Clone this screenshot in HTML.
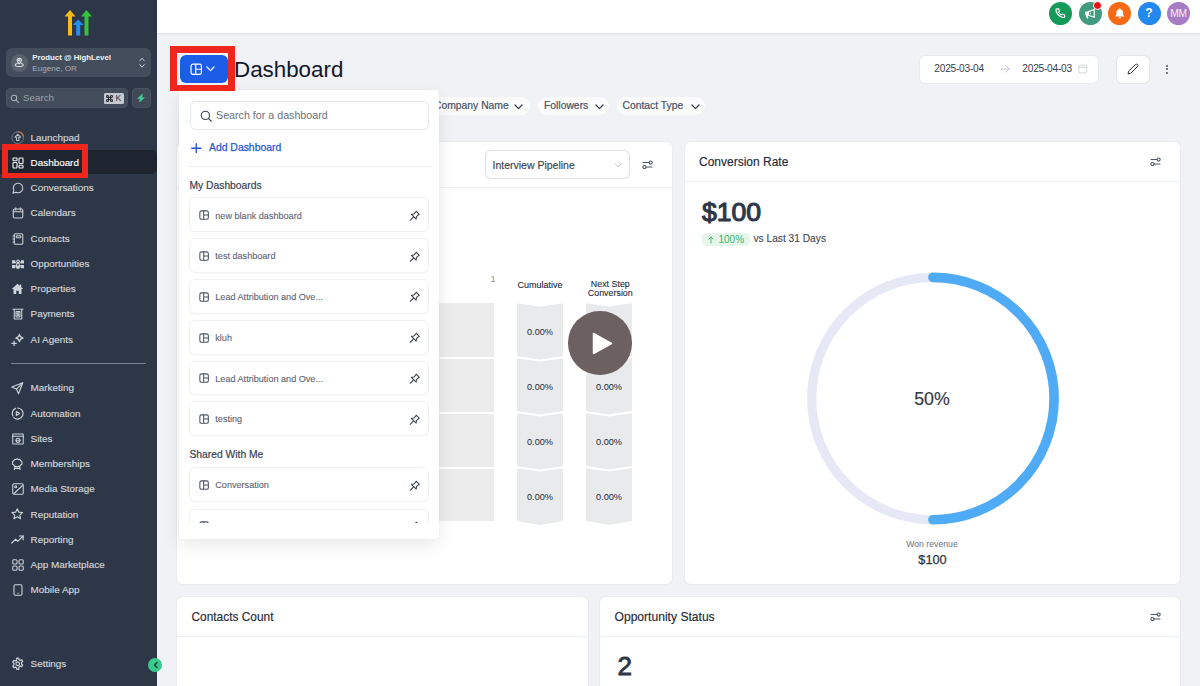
<!DOCTYPE html>
<html><head><meta charset="utf-8">
<style>
*{box-sizing:border-box;margin:0;padding:0}
html,body{width:1200px;height:686px;overflow:hidden}
body{position:relative;background:#f1f2f6;font-family:"Liberation Sans",sans-serif;color:#1f2937}
.abs{position:absolute}
svg{display:block}
#sb{position:absolute;left:0;top:0;width:157px;height:686px;background:#2d3748}
.nav{position:absolute;left:0;width:157px;height:22px;color:#d3d7dd;font-size:9.9px;-webkit-text-stroke:0.15px #d3d7dd}
.nav .ic{position:absolute}
.nav .tx{position:absolute;left:30.6px;top:6.3px;line-height:12px;white-space:nowrap}
#hd{position:absolute;left:157px;top:0;width:1043px;height:34px;background:#fff;border-bottom:1px solid #e1e4e8;box-shadow:0 1px 2px rgba(0,0,0,0.03)}
.circ{position:absolute;top:2px;width:23px;height:23px;border-radius:50%}
.card{position:absolute;background:#fff;border-radius:6px;box-shadow:0 0 0 1px #e9ecf0,0 1px 2px rgba(0,0,0,0.04)}
.chdr{position:absolute;left:0;right:0;top:0;border-bottom:1px solid #edeff2}
.chip{position:absolute;top:97px;height:18px;border-radius:9px;background:#fbfbfc;color:#4a5262;font-size:10.35px;line-height:18px;white-space:nowrap;-webkit-text-stroke:0.2px #4a5262}
</style></head>
<body>
<!-- SIDEBAR -->
<div id="sb">
  <!-- logo -->
  <svg class="abs" style="left:63px;top:9px" width="30" height="28" viewBox="0 0 30 28">
    <path d="M1.5 7.4 L7 1 L12.5 7.4 L9 7.4 L9 26.5 L5 26.5 L5 7.4 Z" fill="#fbbb12"/>
    <path d="M18 7.4 L23.5 1 L29 7.4 L25.5 7.4 L25.5 26.5 L21.5 26.5 L21.5 7.4 Z" fill="#36c23d"/>
    <path d="M9.8 16 L15.2 10.6 L20.6 16 L17.2 16 L17.2 26.5 L13.2 26.5 L13.2 16 Z" fill="#1f8ff5"/>
  </svg>
  <!-- location -->
  <div class="abs" style="left:5.5px;top:48px;width:145.5px;height:29px;border-radius:6px;background:#434d5c"></div>
  <div class="abs" style="left:10.6px;top:54px;width:17.5px;height:17.5px;border-radius:50%;background:#59626f"></div>
  <svg class="abs" style="left:14.2px;top:57.2px" width="10.5" height="10.5" viewBox="0 0 24 24" fill="none" stroke="#e5e7eb" stroke-width="2.3" stroke-linecap="round" stroke-linejoin="round"><path d="M12 15.5c-3-3-5-5.2-5-7.8a5 5 0 0 1 10 0c0 2.6-2 4.8-5 7.8z"/><circle cx="12" cy="7.7" r="1.6"/><path d="M7.5 15c-3 .7-4.8 1.9-4.8 3.3 0 2 4.2 3.4 9.3 3.4s9.3-1.4 9.3-3.4c0-1.4-1.8-2.6-4.8-3.3"/></svg>
  <div class="abs" style="left:32.3px;top:53px;font-size:7.8px;font-weight:700;color:#f3f4f6;white-space:nowrap;line-height:10px">Product @ HighLevel</div>
  <div class="abs" style="left:32.3px;top:63.8px;font-size:8.1px;color:#a9b0ba;white-space:nowrap;line-height:10px">Eugene, OR</div>
  <svg class="abs" style="left:138.6px;top:56.5px" width="6" height="11.5" viewBox="0 0 6 11.5" fill="none" stroke="#c9ced6" stroke-width="1" stroke-linecap="round" stroke-linejoin="round"><path d="M0.8 3.8 L3 1.2 L5.2 3.8"/><path d="M0.8 7.6 L3 10.2 L5.2 7.6"/></svg>
  <!-- search -->
  <div class="abs" style="left:5.5px;top:88px;width:122px;height:19.5px;border-radius:5px;background:#424c5a;box-shadow:inset 0 0 0 0.6px #4d5664"></div>
  <svg class="abs" style="left:9.8px;top:93.6px" width="9.5" height="9.5" viewBox="0 0 24 24" fill="none" stroke="#aab1bb" stroke-width="2.6" stroke-linecap="round"><circle cx="10" cy="10" r="7"/><path d="M15.5 15.5 L22 22"/></svg>
  <div class="abs" style="left:23px;top:92px;font-size:9.8px;color:#9aa2ad;line-height:12px">Search</div>
  <div class="abs" style="left:103.7px;top:92.9px;width:20.3px;height:10.9px;border-radius:1.5px;background:#c6cad0"></div><svg class="abs" style="left:106.2px;top:95px" width="7" height="7" viewBox="0 0 14 14" fill="none" stroke="#2b313b" stroke-width="2.2"><path d="M5 5 H9 V9 H5 Z M5 5 V3 A2 2 0 1 0 3 5 H5 M9 5 V3 A2 2 0 1 1 11 5 H9 M9 9 V11 A2 2 0 1 0 11 9 H9 M5 9 V11 A2 2 0 1 1 3 9 H5"/></svg><div class="abs" style="left:115.5px;top:93px;font-size:8.5px;line-height:11px;color:#2b313b">K</div>
  <div class="abs" style="left:132px;top:88px;width:19px;height:19.5px;border-radius:5px;background:#3f4958;box-shadow:inset 0 0 0 0.8px #4d5766"></div>
  <svg class="abs" style="left:137.2px;top:94px" width="8" height="8.2" viewBox="0 0 8 8.2"><path d="M5.6 0 L0.6 4.5 L3.4 4.5 L2.4 8.2 L7.4 3.7 L4.6 3.7 Z" fill="#3fd298" stroke="#3fd298" stroke-width="0.6" stroke-linejoin="round"/></svg>

  <!-- active -->
  <div class="abs" style="left:0;top:150px;width:157px;height:23.5px;background:#1e2530;border-radius:0 5px 5px 0"></div>
  <div class="abs" style="left:11px;top:362.8px;width:135px;height:1.3px;background:#7a828e"></div>
  <div class="nav" style="top:125.30px"><div class="ic" style="left:10.90px;top:5.55px"><svg width="13.5" height="13.5" viewBox="0 0 24 24" fill="none" stroke-linecap="round" stroke-linejoin="round"><circle cx="12" cy="12" r="10.5" stroke="#6f7784" stroke-width="1.7"/><path d="M12.5 1.5 A10.5 10.5 0 0 1 22 9" stroke="#c9783f" stroke-width="2.2"/><path d="M12 6 L7 11 H10 V17 H14 V11 H17 Z" stroke="#b9c0ca" stroke-width="1.9"/></svg></div><div class="tx">Launchpad</div></div>
  <div class="nav" style="top:150.55px"><div class="ic" style="left:11.65px;top:6.30px"><svg width="12" height="12" viewBox="0 0 24 24" fill="none" stroke="#eef0f3" stroke-width="2.3" stroke-linecap="round" stroke-linejoin="round"><rect x="2" y="2" width="8" height="5.5" rx="1.3"/><rect x="2" y="11" width="8" height="11" rx="1.3"/><rect x="14" y="2" width="8" height="11" rx="1.3"/><rect x="14" y="16.5" width="8" height="5.5" rx="1.3"/></svg></div><div class="tx" style="color:#fff;-webkit-text-stroke-color:#fff">Dashboard</div></div>
  <div class="nav" style="top:175.80px"><div class="ic" style="left:11.65px;top:6.30px"><svg width="12" height="12" viewBox="0 0 24 24" fill="none" stroke="#cdd2d9" stroke-width="2.15" stroke-linecap="round" stroke-linejoin="round"><path d="M7.9 20.5A9.5 9.5 0 1 0 3.6 16.2L2 22.5Z"/></svg></div><div class="tx">Conversations</div></div>
  <div class="nav" style="top:201.05px"><div class="ic" style="left:11.65px;top:6.30px"><svg width="12" height="12" viewBox="0 0 24 24" fill="none" stroke="#cdd2d9" stroke-width="2.15" stroke-linecap="round" stroke-linejoin="round"><rect x="2.5" y="4" width="19" height="18" rx="2.5"/><path d="M7.5 1.5v5M16.5 1.5v5M2.5 9.5h19"/></svg></div><div class="tx">Calendars</div></div>
  <div class="nav" style="top:226.30px"><div class="ic" style="left:11.65px;top:6.30px"><svg width="12" height="12" viewBox="0 0 24 24" fill="none" stroke="#cdd2d9" stroke-width="2.15" stroke-linecap="round" stroke-linejoin="round"><rect x="4.5" y="1.5" width="17" height="21" rx="2"/><rect x="8.5" y="5.5" width="9" height="4" rx="1"/><path d="M2 6h3M2 12h3M2 18h3"/></svg></div><div class="tx">Contacts</div></div>
  <div class="nav" style="top:251.55px"><div class="ic" style="left:10.65px;top:7.05px"><svg width="14" height="10.5" viewBox="0 0 28 21" fill="#cdd2d9"><path d="M2 2.5 H8 L10 7.5 L8.5 9 H2 Z"/><path d="M2 12 H8.5 L10 13.5 L8 18.5 H2 Z"/><path d="M26 2.5 H20 L18 7.5 L19.5 9 H26 Z"/><path d="M26 12 H19.5 L18 13.5 L20 18.5 H26 Z"/><path fill-rule="evenodd" d="M14 1 C16.5 1 17.5 2.5 17.5 4.5 C17.5 6 17 7 16.5 7.5 C17.5 8.5 18 10 18 12 V16 C18 18.5 16.5 20 14 20 C11.5 20 10 18.5 10 16 V12 C10 10 10.5 8.5 11.5 7.5 C11 7 10.5 6 10.5 4.5 C10.5 2.5 11.5 1 14 1 Z M14 3.2 C13 3.2 12.6 3.8 12.6 4.6 C12.6 5.4 13 6 14 6 C15 6 15.4 5.4 15.4 4.6 C15.4 3.8 15 3.2 14 3.2 Z M14 9.5 C12.9 9.5 12.3 10.3 12.3 11.5 C12.3 12.7 12.9 13.5 14 13.5 C15.1 13.5 15.7 12.7 15.7 11.5 C15.7 10.3 15.1 9.5 14 9.5 Z"/></svg></div><div class="tx">Opportunities</div></div>
  <div class="nav" style="top:276.80px"><div class="ic" style="left:11.15px;top:6.30px"><svg width="13" height="12" viewBox="0 0 24 24" fill="#cfd4db"><path d="M12 1.5 L23.5 12 L20 12 L20 22 L14.5 22 L14.5 15.5 L9.5 15.5 L9.5 22 L4 22 L4 12 L0.5 12 Z"/><rect x="16.5" y="3" width="3" height="5"/></svg></div><div class="tx">Properties</div></div>
  <div class="nav" style="top:302.05px"><div class="ic" style="left:11.65px;top:6.30px"><svg width="12" height="12" viewBox="0 0 24 24" fill="none" stroke="#cdd2d9" stroke-width="2.15" stroke-linecap="round" stroke-linejoin="round"><path d="M2 2.5h20"/><path d="M4.5 2.5v19.5h15V2.5"/><rect x="8" y="7" width="8" height="11" rx="0.5"/><path d="M13.5 9.5h-2.2a1.3 1.3 0 0 0 0 2.6h1.4a1.3 1.3 0 0 1 0 2.6h-2.2"/></svg></div><div class="tx">Payments</div></div>
  <div class="nav" style="top:327.30px"><div class="ic" style="left:10.90px;top:5.55px"><svg width="13.5" height="13.5" viewBox="0 0 24 24" fill="none" stroke="#cdd2d9" stroke-width="2.15" stroke-linecap="round" stroke-linejoin="round"><path d="M15 2.5 Q15.8 8.2 21.5 9 Q15.8 9.8 15 15.5 Q14.2 9.8 8.5 9 Q14.2 8.2 15 2.5 Z"/><path d="M5.5 14.5v8M1.5 18.5h8"/></svg></div><div class="tx">AI Agents</div></div>
  <div class="nav" style="top:376.20px"><div class="ic" style="left:11.40px;top:6.05px"><svg width="12.5" height="12.5" viewBox="0 0 24 24" fill="none" stroke="#cdd2d9" stroke-width="2.15" stroke-linecap="round" stroke-linejoin="round"><path d="M22.5 1.5 L1.5 9.5 L10.5 13.5 L14.5 22.5 Z"/><path d="M22.5 1.5 L10.5 13.5"/></svg></div><div class="tx">Marketing</div></div>
  <div class="nav" style="top:401.45px"><div class="ic" style="left:11.15px;top:5.80px"><svg width="13" height="13" viewBox="0 0 24 24" fill="none" stroke="#cdd2d9" stroke-width="2.15" stroke-linecap="round" stroke-linejoin="round"><path d="M12 1.8 A10.2 10.2 0 1 1 5.2 19.6"/><path d="M3.5 16.5 A10.2 10.2 0 0 1 8.2 2.5"/><path d="M9.8 8.2 L16 12 L9.8 15.8 Z"/></svg></div><div class="tx">Automation</div></div>
  <div class="nav" style="top:426.70px"><div class="ic" style="left:11.65px;top:6.30px"><svg width="12" height="12" viewBox="0 0 24 24" fill="none" stroke="#cdd2d9" stroke-width="2.15" stroke-linecap="round" stroke-linejoin="round"><rect x="1.5" y="2" width="21" height="20" rx="1"/><path d="M1.5 6.5h21"/><circle cx="12" cy="14.5" r="4"/><path d="M8 14.5h8"/></svg></div><div class="tx">Sites</div></div>
  <div class="nav" style="top:451.95px"><div class="ic" style="left:11.40px;top:6.05px"><svg width="12.5" height="12.5" viewBox="0 0 24 24" fill="none" stroke="#cdd2d9" stroke-width="2.15" stroke-linecap="round" stroke-linejoin="round"><path d="M12 1.5 L14.5 2.8 L17.3 2.7 L18.6 5.2 L21 6.6 L20.9 9.4 L21 12.2 L18.6 13.6 L17.3 16 L14.5 16 L12 17.3 L9.5 16 L6.7 16 L5.4 13.6 L3 12.2 L3.1 9.4 L3 6.6 L5.4 5.2 L6.7 2.7 L9.5 2.8 Z"/><path d="M7.5 16.5 L6.5 22.5 M16.5 16.5 L17.5 22.5 M6.8 20 H17.2"/></svg></div><div class="tx">Memberships</div></div>
  <div class="nav" style="top:477.20px"><div class="ic" style="left:11.65px;top:6.30px"><svg width="12" height="12" viewBox="0 0 24 24" fill="none" stroke="#cdd2d9" stroke-width="2.15" stroke-linecap="round" stroke-linejoin="round"><rect x="1.5" y="1.5" width="21" height="21" rx="2.5"/><circle cx="7.5" cy="7.5" r="2"/><path d="M4 21 L21 5"/></svg></div><div class="tx">Media Storage</div></div>
  <div class="nav" style="top:502.45px"><div class="ic" style="left:11.40px;top:6.05px"><svg width="12.5" height="12.5" viewBox="0 0 24 24" fill="none" stroke="#cdd2d9" stroke-width="2.15" stroke-linecap="round" stroke-linejoin="round"><path d="M12 1.5 L15.1 8 L22.2 8.8 L16.9 13.6 L18.3 20.6 L12 17 L5.7 20.6 L7.1 13.6 L1.8 8.8 L8.9 8 Z"/></svg></div><div class="tx">Reputation</div></div>
  <div class="nav" style="top:527.70px"><div class="ic" style="left:11.15px;top:5.80px"><svg width="13" height="13" viewBox="0 0 24 24" fill="none" stroke="#cdd2d9" stroke-width="2.15" stroke-linecap="round" stroke-linejoin="round"><path d="M1.5 18.5 L8.5 11.5 L12.5 15.5 L22.5 5.5"/><path d="M15.5 5.5 H22.5 V12.5"/></svg></div><div class="tx">Reporting</div></div>
  <div class="nav" style="top:552.95px"><div class="ic" style="left:11.65px;top:6.30px"><svg width="12" height="12" viewBox="0 0 24 24" fill="none" stroke="#cdd2d9" stroke-width="2.15" stroke-linecap="round" stroke-linejoin="round"><rect x="1.5" y="1.5" width="8.5" height="8.5" rx="2"/><rect x="14" y="1.5" width="8.5" height="8.5" rx="2"/><rect x="1.5" y="14" width="8.5" height="8.5" rx="2"/><rect x="14" y="14" width="8.5" height="8.5" rx="2"/></svg></div><div class="tx">App Marketplace</div></div>
  <div class="nav" style="top:578.20px"><div class="ic" style="left:11.65px;top:6.30px"><svg width="12" height="12" viewBox="0 0 24 24" fill="none" stroke="#cdd2d9" stroke-width="2.15" stroke-linecap="round" stroke-linejoin="round"><rect x="4" y="1.5" width="16" height="21" rx="2.5"/><path d="M12 18.3h.01" stroke-width="2.6"/></svg></div><div class="tx">Mobile App</div></div>
  <div class="nav" style="top:651.80px"><div class="ic" style="left:10.90px;top:5.55px"><svg width="13.5" height="13.5" viewBox="0 0 24 24" fill="none" stroke="#cdd2d9" stroke-width="2.15" stroke-linecap="round" stroke-linejoin="round"><path d="M10.3 2h3.4l.6 2.9a7.8 7.8 0 0 1 2 1.2l2.8-1 1.7 3-2.2 1.9a7.8 7.8 0 0 1 0 2.3l2.2 1.9-1.7 3-2.8-1a7.8 7.8 0 0 1-2 1.2L13.7 22h-3.4l-.6-2.9a7.8 7.8 0 0 1-2-1.2l-2.8 1-1.7-3 2.2-1.9a7.8 7.8 0 0 1 0-2.3L3.2 9.1l1.7-3 2.8 1a7.8 7.8 0 0 1 2-1.2Z"/><circle cx="12" cy="12" r="3.2"/></svg></div><div class="tx">Settings</div></div>
</div>
<div class="abs" style="left:148.3px;top:658px;width:14.2px;height:14.2px;border-radius:50%;background:#36c98b"></div>
<svg class="abs" style="left:151.5px;top:661.2px" width="8" height="8" viewBox="0 0 8 8" fill="none" stroke="#1d3a2f" stroke-width="1.3" stroke-linecap="round" stroke-linejoin="round"><path d="M5 1.5 L2.6 4 L5 6.5"/></svg>

<!-- HEADER -->
<div id="hd"></div>
<div class="circ" style="left:1049px;background:#139a58"></div>
<svg class="abs" style="left:1055.2px;top:7.6px" width="10.5" height="10.5" viewBox="0 0 24 24" fill="none" stroke="#fff" stroke-width="2.6" stroke-linejoin="round"><path d="M22 16.9v3a2 2 0 0 1-2.2 2 19.8 19.8 0 0 1-8.6-3.1 19.5 19.5 0 0 1-6-6A19.8 19.8 0 0 1 2.1 4.2 2 2 0 0 1 4.1 2h3a2 2 0 0 1 2 1.7c.1 1 .4 1.9.7 2.8a2 2 0 0 1-.5 2.1L8 9.9a16 16 0 0 0 6 6l1.3-1.3a2 2 0 0 1 2.1-.4c.9.3 1.8.6 2.8.7a2 2 0 0 1 1.7 2z"/></svg>
<div class="circ" style="left:1079px;background:#429b7e"></div>
<svg class="abs" style="left:1084px;top:7.5px" width="12" height="12" viewBox="0 0 24 24"><rect x="2.4" y="7" width="6.5" height="7.6" rx="0.8" fill="#fff"/><path d="M3.8 14 L5.4 21 L8.6 21 L7.8 14 Z" fill="#fff"/><path d="M9 7.2 L20.5 3 L20.5 18.6 L9 14.4 Z" fill="none" stroke="#fff" stroke-width="2.4" stroke-linejoin="round"/><path d="M13 9.5 v2.8" stroke="#fff" stroke-width="1.6"/></svg>
<div class="abs" style="left:1093px;top:1px;width:9.4px;height:9.4px;border-radius:50%;background:#ee0d14;border:1.2px solid #fff"></div>
<div class="circ" style="left:1108px;background:#f56a12"></div>
<svg class="abs" style="left:1113.8px;top:7px" width="11.5" height="12" viewBox="0 0 24 24" fill="#fff"><path d="M12 2a1.5 1.5 0 0 1 1.5 1.5v.6A7 7 0 0 1 19 11v5l2.5 2.5v1H2.5v-1L5 16v-5a7 7 0 0 1 5.5-6.9v-.6A1.5 1.5 0 0 1 12 2z"/><path d="M9.5 21h5a2.5 2.5 0 0 1-5 0z"/></svg>
<div class="circ" style="left:1137.5px;background:#2389ee"></div>
<div class="abs" style="left:1137.5px;top:2px;width:23px;height:23px;line-height:23px;text-align:center;color:#fff;font-size:12px;font-weight:700">?</div>
<div class="circ" style="left:1167px;background:#a67cc4"></div>
<div class="abs" style="left:1167px;top:2px;width:23px;height:23px;line-height:23px;text-align:center;color:#f3eef8;font-size:10.3px;letter-spacing:-0.4px">MM</div>

<!-- TITLE -->
<div class="abs" style="left:179.5px;top:55px;width:48px;height:28px;border-radius:6px;background:#1b5de6"></div>
<svg class="abs" style="left:189.5px;top:62.8px" width="12.5" height="12.5" viewBox="0 0 24 24" fill="none" stroke="#fff" stroke-width="2.3" stroke-linejoin="round"><rect x="2" y="2" width="20" height="20" rx="4"/><path d="M11 2v20M11 12h11"/></svg>
<svg class="abs" style="left:205.5px;top:65.5px" width="9" height="6" viewBox="0 0 9 6" fill="none" stroke="#fff" stroke-width="1.3" stroke-linecap="round" stroke-linejoin="round"><path d="M1 1 L4.5 4.6 L8 1"/></svg>
<div class="abs" style="left:234px;top:57.3px;font-size:22.35px;line-height:26px;color:#111827;white-space:nowrap">Dashboard</div>

<!-- DATE -->
<div class="abs" style="left:920px;top:55.5px;width:178px;height:27px;border-radius:5px;background:#fff;box-shadow:0 0 0 1px #e8ebef"></div>
<div class="abs" style="left:934.3px;top:62.5px;font-size:10.2px;letter-spacing:-0.25px;line-height:12px;color:#3a404a;white-space:nowrap">2025-03-04</div>
<svg class="abs" style="left:999.5px;top:64.5px" width="10" height="8" viewBox="0 0 10 8" fill="none" stroke="#b9bec6" stroke-width="0.9" stroke-linecap="round" stroke-linejoin="round"><path d="M0.8 4h8.4M5.8 0.8 L9.2 4 L5.8 7.2"/></svg>
<div class="abs" style="left:1022.3px;top:62.5px;font-size:10.2px;letter-spacing:-0.25px;line-height:12px;color:#3a404a;white-space:nowrap">2025-04-03</div>
<svg class="abs" style="left:1078.3px;top:63.5px" width="9.5" height="10" viewBox="0 0 10 10" fill="none" stroke="#c9cdd3" stroke-width="0.9"><rect x="0.8" y="1" width="8.4" height="8.2" rx="1.5"/><path d="M0.8 3.3h8.4"/></svg>
<div class="abs" style="left:1116.5px;top:55.5px;width:32.5px;height:27px;border-radius:5px;background:#fff;box-shadow:0 0 0 1px #e3e6ea"></div>
<svg class="abs" style="left:1126.5px;top:62.5px" width="12" height="12" viewBox="0 0 24 24" fill="none" stroke="#2f353d" stroke-width="2" stroke-linecap="round" stroke-linejoin="round"><path d="M17 3a2.8 2.8 0 1 1 4 4L7.5 20.5 2 22l1.5-5.5Z"/></svg>
<div class="abs" style="left:1165.5px;top:64.8px;width:2.2px;height:2.2px;border-radius:50%;background:#4b5563"></div>
<div class="abs" style="left:1165.5px;top:68.3px;width:2.2px;height:2.2px;border-radius:50%;background:#4b5563"></div>
<div class="abs" style="left:1165.5px;top:71.8px;width:2.2px;height:2.2px;border-radius:50%;background:#4b5563"></div>

<!-- CHIPS -->
<div class="chip" style="left:398px;width:132.3px"><span style="position:absolute;left:36px;top:0">Company Name</span><svg style="position:absolute;left:115.5px;top:6.5px" width="9" height="6" viewBox="0 0 9 6" fill="none" stroke="#374151" stroke-width="1.3" stroke-linecap="round" stroke-linejoin="round"><path d="M1 1 L4.5 4.6 L8 1"/></svg></div>
<div class="chip" style="left:538.3px;width:70.5px"><span style="position:absolute;left:5.7px;top:0">Followers</span><svg style="position:absolute;left:56.3px;top:6.5px" width="9" height="6" viewBox="0 0 9 6" fill="none" stroke="#374151" stroke-width="1.3" stroke-linecap="round" stroke-linejoin="round"><path d="M1 1 L4.5 4.6 L8 1"/></svg></div>
<div class="chip" style="left:616.8px;width:88.7px"><span style="position:absolute;left:5.7px;top:0">Contact Type</span><svg style="position:absolute;left:74.5px;top:6.5px" width="9" height="6" viewBox="0 0 9 6" fill="none" stroke="#374151" stroke-width="1.3" stroke-linecap="round" stroke-linejoin="round"><path d="M1 1 L4.5 4.6 L8 1"/></svg></div>

<!-- LEFT CARD -->
<div class="card" style="left:177px;top:142px;width:494.8px;height:442px"><div class="chdr" style="height:46px"></div></div>
<div class="abs" style="left:484.5px;top:150px;width:145.5px;height:28.7px;border-radius:6px;background:#fff;box-shadow:inset 0 0 0 1px #dcdfe3"></div>
<div class="abs" style="left:492.5px;top:158.5px;font-size:10.5px;line-height:12px;color:#3b424d;white-space:nowrap;-webkit-text-stroke:0.15px #3b424d">Interview Pipeline</div>
<svg class="abs" style="left:614px;top:162.5px" width="8" height="5" viewBox="0 0 8 5" fill="none" stroke="#c6cad0" stroke-width="0.9" stroke-linecap="round" stroke-linejoin="round"><path d="M0.8 0.8 L4 4 L7.2 0.8"/></svg>
<svg class="abs" style="left:641.6px;top:159.6px" width="11" height="9.5" viewBox="0 0 11 9.5" fill="none" stroke="#4b5563" stroke-width="1.05" stroke-linecap="round"><path d="M1 2.5h6"/><circle cx="8.6" cy="2.5" r="1.6"/><path d="M4 7H10"/><circle cx="2.4" cy="7" r="1.6"/></svg>

<!-- funnel -->
<div class="abs" style="left:495.5px;top:274px;font-size:9px;line-height:10px;color:#8b929c;transform:translateX(-100%)">1</div>
<div class="abs" style="left:517.5px;top:280px;width:45px;text-align:center;font-size:9px;line-height:10px;color:#1f2937;white-space:nowrap;-webkit-text-stroke:0.1px #1f2937">Cumulative</div>
<div class="abs" style="left:587.8px;top:280px;width:45px;text-align:center;font-size:8.9px;line-height:8.6px;color:#1f2937;white-space:nowrap;-webkit-text-stroke:0.1px #1f2937">Next Step<br>Conversion</div>
<div class="abs" style="left:300px;top:303px;width:194px;height:53.5px;background:#ececed"></div>
<div class="abs" style="left:300px;top:358.5px;width:194px;height:53px;background:#ececed"></div>
<div class="abs" style="left:300px;top:413.5px;width:194px;height:53px;background:#ececed"></div>
<div class="abs" style="left:300px;top:468.5px;width:194px;height:52.5px;background:#ececed"></div>
<svg class="abs" style="left:517px;top:300px" width="46" height="230" viewBox="0 0 46 230">
  <g fill="#e9eaec">
    <path d="M0 3.2 L23 6.4 L46 3.2 L46 56 L23 59.4 L0 56 Z"/>
    <path d="M0 58.3 L23 61.6 L46 58.3 L46 111 L23 114.4 L0 111 Z"/>
    <path d="M0 113.3 L23 116.6 L46 113.3 L46 166 L23 169.4 L0 166 Z"/>
    <path d="M0 168.3 L23 171.6 L46 168.3 L46 221 L23 225 L0 221 Z"/>
  </g>
</svg>
<svg class="abs" style="left:586px;top:300px" width="46" height="230" viewBox="0 0 46 230">
  <g fill="#e9eaec">
    <path d="M0 3.2 L23 6.4 L46 3.2 L46 56 L23 59.4 L0 56 Z"/>
    <path d="M0 58.3 L23 61.6 L46 58.3 L46 111 L23 114.4 L0 111 Z"/>
    <path d="M0 113.3 L23 116.6 L46 113.3 L46 166 L23 169.4 L0 166 Z"/>
    <path d="M0 168.3 L23 171.6 L46 168.3 L46 221 L23 225 L0 221 Z"/>
  </g>
</svg>
<div class="abs" style="left:517px;top:326.5px;width:46px;text-align:center;font-size:9.2px;line-height:10px;color:#1f2937">0.00%</div>
<div class="abs" style="left:517px;top:382px;width:46px;text-align:center;font-size:9.2px;line-height:10px;color:#1f2937">0.00%</div>
<div class="abs" style="left:517px;top:437px;width:46px;text-align:center;font-size:9.2px;line-height:10px;color:#1f2937">0.00%</div>
<div class="abs" style="left:517px;top:492px;width:46px;text-align:center;font-size:9.2px;line-height:10px;color:#1f2937">0.00%</div>
<div class="abs" style="left:586px;top:381.5px;width:46px;text-align:center;font-size:9.2px;line-height:10px;color:#1f2937">0.00%</div>
<div class="abs" style="left:586px;top:436.5px;width:46px;text-align:center;font-size:9.2px;line-height:10px;color:#1f2937">0.00%</div>
<div class="abs" style="left:586px;top:491.5px;width:46px;text-align:center;font-size:9.2px;line-height:10px;color:#1f2937">0.00%</div>
<div class="abs" style="left:568.3px;top:311.3px;width:63.4px;height:63.4px;border-radius:50%;background:#6c6160"></div>
<svg class="abs" style="left:592px;top:331.5px" width="21" height="23" viewBox="0 0 21 23"><path d="M1.5 1.5 L19.5 11.5 L1.5 21.5 Z" fill="#fff" stroke="#fff" stroke-width="1.5" stroke-linejoin="round"/></svg>

<!-- RIGHT CARD -->
<div class="card" style="left:685px;top:142px;width:495px;height:442px"><div class="chdr" style="height:39.5px"></div></div>
<div class="abs" style="left:699px;top:155px;font-size:12px;line-height:14px;color:#1f2937;white-space:nowrap;-webkit-text-stroke:0.15px #1f2937">Conversion Rate</div>
<svg class="abs" style="left:1149.6px;top:156.6px" width="11" height="9.5" viewBox="0 0 11 9.5" fill="none" stroke="#4b5563" stroke-width="1.05" stroke-linecap="round"><path d="M1 2.5h6"/><circle cx="8.6" cy="2.5" r="1.6"/><path d="M4 7H10"/><circle cx="2.4" cy="7" r="1.6"/></svg>
<div class="abs" style="left:702px;top:196.6px;font-size:26.6px;line-height:30px;color:#2d3748;white-space:nowrap;-webkit-text-stroke:1.1px #2d3748">$100</div>
<div class="abs" style="left:702.4px;top:232.6px;width:47.6px;height:13.5px;border-radius:4.5px;background:#e6f6eb"></div>
<svg class="abs" style="left:708px;top:235.5px" width="6" height="8" viewBox="0 0 6 8" fill="none" stroke="#39b46a" stroke-width="0.9" stroke-linecap="round" stroke-linejoin="round"><path d="M3 7V1M0.8 3.2 L3 1 L5.2 3.2"/></svg>
<div class="abs" style="left:718.5px;top:233.5px;font-size:10px;line-height:12px;color:#3db46d;white-space:nowrap">100%</div>
<div class="abs" style="left:753.5px;top:233px;font-size:10.2px;line-height:12px;color:#3f4650;white-space:nowrap;-webkit-text-stroke:0.1px #3f4650">vs Last 31 Days</div>
<svg class="abs" style="left:806px;top:272px" width="254" height="254" viewBox="0 0 254 254">
  <circle cx="126.9" cy="126.6" r="121.2" fill="none" stroke="#e6e9f5" stroke-width="9.3"/>
  <path d="M126.9 5.4 A121.2 121.2 0 0 1 126.9 247.8" fill="none" stroke="#4fabf6" stroke-width="9.6" stroke-linecap="round"/>
</svg>
<div class="abs" style="left:882px;top:388px;width:100px;text-align:center;font-size:17.8px;line-height:22px;color:#363d48;-webkit-text-stroke:0.2px #363d48">50%</div>
<div class="abs" style="left:882px;top:538.5px;width:100px;text-align:center;font-size:8.7px;line-height:10px;color:#6b7280">Won revenue</div>
<div class="abs" style="left:882.5px;top:552.8px;width:100px;text-align:center;font-size:12.8px;line-height:14px;color:#2d3748;-webkit-text-stroke:0.25px #2d3748">$100</div>

<!-- BOTTOM CARDS -->
<div class="card" style="left:177px;top:597px;width:411px;height:100px"><div class="chdr" style="height:39.5px"></div></div>
<div class="abs" style="left:191.5px;top:610px;font-size:11.9px;line-height:14px;color:#1f2937;white-space:nowrap;-webkit-text-stroke:0.15px #1f2937">Contacts Count</div>
<div class="card" style="left:600.3px;top:597px;width:579.7px;height:100px"><div class="chdr" style="height:39.5px"></div></div>
<div class="abs" style="left:614.5px;top:610px;font-size:12.1px;line-height:14px;color:#1f2937;white-space:nowrap;-webkit-text-stroke:0.15px #1f2937">Opportunity Status</div>
<svg class="abs" style="left:1149.6px;top:611.6px" width="11" height="9.5" viewBox="0 0 11 9.5" fill="none" stroke="#4b5563" stroke-width="1.05" stroke-linecap="round"><path d="M1 2.5h6"/><circle cx="8.6" cy="2.5" r="1.6"/><path d="M4 7H10"/><circle cx="2.4" cy="7" r="1.6"/></svg>
<div class="abs" style="left:617.5px;top:651.3px;font-size:26px;line-height:30px;color:#2d3748;-webkit-text-stroke:0.9px #2d3748">2</div>

<!-- PANEL -->
<div class="abs" style="left:179px;top:90px;width:260px;height:449px;background:#fff;border-radius:3px;box-shadow:0 6px 18px rgba(0,0,0,0.09),0 0 1.5px rgba(0,0,0,0.07)"></div>
<div class="abs" style="left:189.5px;top:101px;width:239.5px;height:28.5px;border-radius:6px;background:#fff;box-shadow:inset 0 0 0 1px #e3e6ea"></div>
<svg class="abs" style="left:199.8px;top:109.6px" width="12.3" height="12.3" viewBox="0 0 24 24" fill="none" stroke="#374151" stroke-width="2.2" stroke-linecap="round"><circle cx="10.5" cy="10.5" r="8"/><path d="M16.5 16.5 L22 22"/></svg>
<div class="abs" style="left:216px;top:109px;font-size:10.7px;line-height:13px;color:#6b7280;white-space:nowrap">Search for a dashboard</div>
<svg class="abs" style="left:191px;top:142.5px" width="10.5" height="10.5" viewBox="0 0 10 10" fill="none" stroke="#2353d5" stroke-width="1.3" stroke-linecap="round"><path d="M5 0.7v8.6M0.7 5h8.6"/></svg>
<div class="abs" style="left:209px;top:141px;font-size:10.4px;line-height:13px;color:#2556d4;white-space:nowrap;-webkit-text-stroke:0.25px #2556d4">Add Dashboard</div>
<div class="abs" style="left:187px;top:166px;width:244px;height:1px;background:#eceef1"></div>
<div class="abs" style="left:189.5px;top:180px;font-size:10.3px;line-height:12px;color:#374151;white-space:nowrap;-webkit-text-stroke:0.2px #374151">My Dashboards</div>
<div class="abs" style="left:179px;top:190px;width:260px;height:333px;overflow:hidden"><div class="abs" style="left:-179px;top:-190px;width:1200px;height:686px">
<div class="abs" style="left:189px;top:197.4px;width:240px;height:34.8px;border-radius:6px;background:#fff;box-shadow:inset 0 0 0 1px #eff1f4,0 1px 1px rgba(0,0,0,0.02)"></div>
<svg class="abs" style="left:198.9px;top:210.1px" width="10.2" height="10.2" viewBox="0 0 24 24" fill="none" stroke="#4b5563" stroke-width="2.5" stroke-linejoin="round"><rect x="2" y="2" width="20" height="20" rx="4"/><path d="M11 2v20M11 12h11"/></svg>
<div class="abs" style="left:215.3px;top:210.5px;font-size:9.1px;line-height:11px;color:#5b6472;white-space:nowrap;-webkit-text-stroke:0.1px #5b6472">new blank dashboard</div>
<svg class="abs" style="left:409.2px;top:209.8px" width="11.5" height="11.5" viewBox="0 0 24 24" fill="none" stroke="#363d48" stroke-width="2.1" stroke-linecap="round" stroke-linejoin="round"><path d="M15 2.5 L21.5 9 L19.5 10 L15.5 14 L15 19 L5 9 L10 8.5 L14 4.5 Z"/><path d="M9.5 14.5 L2.5 21.5"/></svg>
<div class="abs" style="left:189px;top:238.2px;width:240px;height:34.8px;border-radius:6px;background:#fff;box-shadow:inset 0 0 0 1px #eff1f4,0 1px 1px rgba(0,0,0,0.02)"></div>
<svg class="abs" style="left:198.9px;top:250.9px" width="10.2" height="10.2" viewBox="0 0 24 24" fill="none" stroke="#4b5563" stroke-width="2.5" stroke-linejoin="round"><rect x="2" y="2" width="20" height="20" rx="4"/><path d="M11 2v20M11 12h11"/></svg>
<div class="abs" style="left:215.3px;top:251.3px;font-size:9.1px;line-height:11px;color:#5b6472;white-space:nowrap;-webkit-text-stroke:0.1px #5b6472">test dashboard</div>
<svg class="abs" style="left:409.2px;top:250.6px" width="11.5" height="11.5" viewBox="0 0 24 24" fill="none" stroke="#363d48" stroke-width="2.1" stroke-linecap="round" stroke-linejoin="round"><path d="M15 2.5 L21.5 9 L19.5 10 L15.5 14 L15 19 L5 9 L10 8.5 L14 4.5 Z"/><path d="M9.5 14.5 L2.5 21.5"/></svg>
<div class="abs" style="left:189px;top:279.0px;width:240px;height:34.8px;border-radius:6px;background:#fff;box-shadow:inset 0 0 0 1px #eff1f4,0 1px 1px rgba(0,0,0,0.02)"></div>
<svg class="abs" style="left:198.9px;top:291.7px" width="10.2" height="10.2" viewBox="0 0 24 24" fill="none" stroke="#4b5563" stroke-width="2.5" stroke-linejoin="round"><rect x="2" y="2" width="20" height="20" rx="4"/><path d="M11 2v20M11 12h11"/></svg>
<div class="abs" style="left:215.3px;top:292.1px;font-size:9.1px;line-height:11px;color:#5b6472;white-space:nowrap;-webkit-text-stroke:0.1px #5b6472">Lead Attribution and Ove...</div>
<svg class="abs" style="left:409.2px;top:291.4px" width="11.5" height="11.5" viewBox="0 0 24 24" fill="none" stroke="#363d48" stroke-width="2.1" stroke-linecap="round" stroke-linejoin="round"><path d="M15 2.5 L21.5 9 L19.5 10 L15.5 14 L15 19 L5 9 L10 8.5 L14 4.5 Z"/><path d="M9.5 14.5 L2.5 21.5"/></svg>
<div class="abs" style="left:189px;top:319.8px;width:240px;height:34.8px;border-radius:6px;background:#fff;box-shadow:inset 0 0 0 1px #eff1f4,0 1px 1px rgba(0,0,0,0.02)"></div>
<svg class="abs" style="left:198.9px;top:332.5px" width="10.2" height="10.2" viewBox="0 0 24 24" fill="none" stroke="#4b5563" stroke-width="2.5" stroke-linejoin="round"><rect x="2" y="2" width="20" height="20" rx="4"/><path d="M11 2v20M11 12h11"/></svg>
<div class="abs" style="left:215.3px;top:332.9px;font-size:9.1px;line-height:11px;color:#5b6472;white-space:nowrap;-webkit-text-stroke:0.1px #5b6472">kluh</div>
<svg class="abs" style="left:409.2px;top:332.2px" width="11.5" height="11.5" viewBox="0 0 24 24" fill="none" stroke="#363d48" stroke-width="2.1" stroke-linecap="round" stroke-linejoin="round"><path d="M15 2.5 L21.5 9 L19.5 10 L15.5 14 L15 19 L5 9 L10 8.5 L14 4.5 Z"/><path d="M9.5 14.5 L2.5 21.5"/></svg>
<div class="abs" style="left:189px;top:360.5px;width:240px;height:34.8px;border-radius:6px;background:#fff;box-shadow:inset 0 0 0 1px #eff1f4,0 1px 1px rgba(0,0,0,0.02)"></div>
<svg class="abs" style="left:198.9px;top:373.2px" width="10.2" height="10.2" viewBox="0 0 24 24" fill="none" stroke="#4b5563" stroke-width="2.5" stroke-linejoin="round"><rect x="2" y="2" width="20" height="20" rx="4"/><path d="M11 2v20M11 12h11"/></svg>
<div class="abs" style="left:215.3px;top:373.6px;font-size:9.1px;line-height:11px;color:#5b6472;white-space:nowrap;-webkit-text-stroke:0.1px #5b6472">Lead Attribution and Ove...</div>
<svg class="abs" style="left:409.2px;top:372.9px" width="11.5" height="11.5" viewBox="0 0 24 24" fill="none" stroke="#363d48" stroke-width="2.1" stroke-linecap="round" stroke-linejoin="round"><path d="M15 2.5 L21.5 9 L19.5 10 L15.5 14 L15 19 L5 9 L10 8.5 L14 4.5 Z"/><path d="M9.5 14.5 L2.5 21.5"/></svg>
<div class="abs" style="left:189px;top:401.2px;width:240px;height:34.8px;border-radius:6px;background:#fff;box-shadow:inset 0 0 0 1px #eff1f4,0 1px 1px rgba(0,0,0,0.02)"></div>
<svg class="abs" style="left:198.9px;top:413.9px" width="10.2" height="10.2" viewBox="0 0 24 24" fill="none" stroke="#4b5563" stroke-width="2.5" stroke-linejoin="round"><rect x="2" y="2" width="20" height="20" rx="4"/><path d="M11 2v20M11 12h11"/></svg>
<div class="abs" style="left:215.3px;top:414.3px;font-size:9.1px;line-height:11px;color:#5b6472;white-space:nowrap;-webkit-text-stroke:0.1px #5b6472">testing</div>
<svg class="abs" style="left:409.2px;top:413.6px" width="11.5" height="11.5" viewBox="0 0 24 24" fill="none" stroke="#363d48" stroke-width="2.1" stroke-linecap="round" stroke-linejoin="round"><path d="M15 2.5 L21.5 9 L19.5 10 L15.5 14 L15 19 L5 9 L10 8.5 L14 4.5 Z"/><path d="M9.5 14.5 L2.5 21.5"/></svg>
<div class="abs" style="left:189.5px;top:449.3px;font-size:10.3px;line-height:12px;color:#374151;white-space:nowrap;-webkit-text-stroke:0.2px #374151">Shared With Me</div>
<div class="abs" style="left:189px;top:467.3px;width:240px;height:34.8px;border-radius:6px;background:#fff;box-shadow:inset 0 0 0 1px #eff1f4,0 1px 1px rgba(0,0,0,0.02)"></div>
<svg class="abs" style="left:198.9px;top:480.0px" width="10.2" height="10.2" viewBox="0 0 24 24" fill="none" stroke="#4b5563" stroke-width="2.5" stroke-linejoin="round"><rect x="2" y="2" width="20" height="20" rx="4"/><path d="M11 2v20M11 12h11"/></svg>
<div class="abs" style="left:215.3px;top:480.4px;font-size:9.1px;line-height:11px;color:#5b6472;white-space:nowrap;-webkit-text-stroke:0.1px #5b6472">Conversation</div>
<svg class="abs" style="left:409.2px;top:479.7px" width="11.5" height="11.5" viewBox="0 0 24 24" fill="none" stroke="#363d48" stroke-width="2.1" stroke-linecap="round" stroke-linejoin="round"><path d="M15 2.5 L21.5 9 L19.5 10 L15.5 14 L15 19 L5 9 L10 8.5 L14 4.5 Z"/><path d="M9.5 14.5 L2.5 21.5"/></svg>
<div class="abs" style="left:189px;top:508.6px;width:240px;height:34.8px;border-radius:6px;background:#fff;box-shadow:inset 0 0 0 1px #eff1f4,0 1px 1px rgba(0,0,0,0.02)"></div>
<svg class="abs" style="left:198.9px;top:521.3px" width="10.2" height="10.2" viewBox="0 0 24 24" fill="none" stroke="#4b5563" stroke-width="2.5" stroke-linejoin="round"><rect x="2" y="2" width="20" height="20" rx="4"/><path d="M11 2v20M11 12h11"/></svg>
<div class="abs" style="left:215.3px;top:521.7px;font-size:9.1px;line-height:11px;color:#5b6472;white-space:nowrap;-webkit-text-stroke:0.1px #5b6472">Lead Attribution and Ove...</div>
<svg class="abs" style="left:409.2px;top:521.0px" width="11.5" height="11.5" viewBox="0 0 24 24" fill="none" stroke="#363d48" stroke-width="2.1" stroke-linecap="round" stroke-linejoin="round"><path d="M15 2.5 L21.5 9 L19.5 10 L15.5 14 L15 19 L5 9 L10 8.5 L14 4.5 Z"/><path d="M9.5 14.5 L2.5 21.5"/></svg>
</div></div>

<!-- RED BOXES -->
<div class="abs" style="left:170.4px;top:46.2px;width:65.1px;height:45px;border-style:solid;border-color:#f0251b;border-width:7.4px 7.4px 6.8px 7.6px"></div>
<div class="abs" style="left:2px;top:144.4px;width:85.8px;height:33.4px;border-style:solid;border-color:#f0251b;border-width:6.6px 6px 5.8px 6.6px"></div>
</body></html>
